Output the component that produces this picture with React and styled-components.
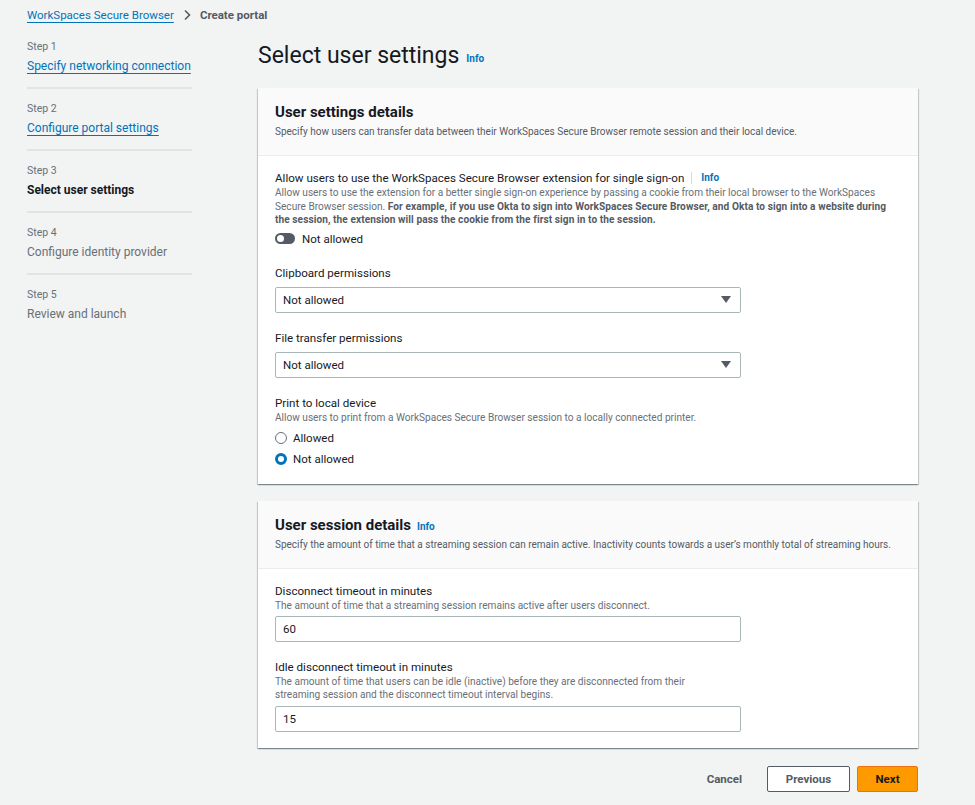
import React from 'react';
import styled, { createGlobalStyle } from 'styled-components';

const GlobalStyle = createGlobalStyle`
    body {
        margin: 0;
        background: #f2f3f3;
        font-family: Roboto, 'Liberation Sans', Arial, sans-serif;
        color: #16191f;
    }
`;

const Page = styled.div`
    padding: 7px 0 0 27px;
    width: 918px;
    min-height: 805px;
    box-sizing: border-box;
`;

const Breadcrumbs = styled.nav`
    display: flex;
    align-items: center;
    gap: 7px;
    height: 16px;
    font-size: 11.5px;
`;

const Crumb = styled.a`
    color: #0073bb;
    text-decoration: underline;
    text-underline-offset: 3px;
`;

const Current = styled.span`
    color: #545b64;
    font-weight: bold;
`;

const Layout = styled.div`
    display: grid;
    grid-template-columns: 165px 1fr;
    column-gap: 66px;
    margin-top: 11px;
`;

const StepList = styled.ol`
    list-style: none;
    margin: 6px 0 0;
    padding: 0;
`;

const Step = styled.li`
    padding: 0 0 13px;
    margin-bottom: 13px;
    border-bottom: ${({ last }) => (last ? 'none' : '2px solid #e1e4e4')};
`;

const StepLabel = styled.div`
    font-size: 10.5px;
    color: #687078;
    line-height: 14px;
    margin-bottom: 5px;
`;

const StepName = styled.div`
    font-size: 12px;
    line-height: 15px;
    color: ${({ state }) => (state === 'active' ? '#16191f' : state === 'link' ? '#0073bb' : '#687078')};
    font-weight: ${({ state }) => (state === 'active' ? 'bold' : 'normal')};
    text-decoration: ${({ state }) => (state === 'link' ? 'underline' : 'none')};
    text-underline-offset: 3px;
`;

const Main = styled.main`
    display: flex;
    flex-direction: column;
    gap: 17px;
`;

const Title = styled.h1`
    margin: 7px 0 0;
    height: 30px;
    display: flex;
    align-items: center;
    gap: 7px;
    font-size: 23px;
    font-weight: normal;
    line-height: 28px;
`;

const Info = styled.a`
    color: #0073bb;
    font-size: 10px;
    font-weight: bold;
    margin-top: ${({ low }) => (low ? '5px' : '0')};
`;

const Card = styled.section`
    background: #fff;
    box-shadow: 0 1px 1px 0 rgba(0, 28, 36, 0.3), 1px 1px 1px 0 rgba(0, 28, 36, 0.15),
        -1px 1px 1px 0 rgba(0, 28, 36, 0.15);
`;

const CardHeader = styled.header`
    background: #fafafa;
    border-bottom: 1px solid #eaeded;
    padding: 14px 17px 17px;
`;

const CardTitle = styled.h2`
    margin: 0;
    height: 20px;
    font-size: 15px;
    line-height: 20px;
    display: flex;
    align-items: baseline;
    gap: 6px;
`;

const CardDescription = styled.p`
    margin: 3px 0 0;
    font-size: 10px;
    line-height: 13px;
    color: #545b64;
`;

const CardBody = styled.div`
    padding: 14px 17px 16px;
    display: flex;
    flex-direction: column;
    gap: 17px;
`;

const Field = styled.div`
    max-width: ${({ narrow }) => (narrow ? '466px' : 'none')};
`;

const Label = styled.div`
    font-size: 11.6px;
    line-height: 16px;
    display: flex;
    align-items: center;
`;

const LabelInfo = styled.span`
    margin-left: 7px;
    padding-left: 9px;
    border-left: 1px solid #d5dbdb;
    color: #0073bb;
    font-size: 10px;
    font-weight: bold;
    line-height: 12px;
`;

const Hint = styled.p`
    margin: 0;
    max-width: ${({ wrap }) => (wrap ? `${wrap}px` : 'none')};
    font-size: 10.1px;
    line-height: 13.5px;
    color: #687078;

    strong {
        color: #545b64;
        letter-spacing: 0.08px;
    }
`;

const Control = styled.div`
    margin-top: ${({ gap }) => gap}px;
    height: 26px;
    box-sizing: border-box;
    border: 1px solid #aab7b8;
    border-radius: 2px;
    background: #fff;
    display: flex;
    align-items: center;
    justify-content: space-between;
    padding: 0 9px 0 7px;
    font-size: 11.5px;
`;

const Arrow = styled.span`
    width: 0;
    height: 0;
    border-left: 5px solid transparent;
    border-right: 5px solid transparent;
    border-top: 7px solid #545b64;
`;

const ToggleRow = styled.div`
    margin: 5px 0 2px;
    display: flex;
    align-items: center;
    gap: 7px;
    font-size: 11.5px;
`;

const Track = styled.span`
    width: 20px;
    height: 11px;
    border-radius: 6px;
    background: #545b64;
    position: relative;

    &::after {
        content: '';
        position: absolute;
        left: 2px;
        top: 2px;
        width: 7px;
        height: 7px;
        border-radius: 50%;
        background: #fff;
    }
`;

const RadioGroup = styled.div`
    margin-top: 5px;
    display: flex;
    flex-direction: column;
    gap: 3px;
`;

const RadioRow = styled.label`
    display: flex;
    align-items: center;
    gap: 6px;
    height: 18px;
    font-size: 11.5px;
`;

const Dot = styled.span`
    width: 12px;
    height: 12px;
    box-sizing: border-box;
    border-radius: 50%;
    background: #fff;
    border: ${({ checked }) => (checked ? '3.5px solid #0073bb' : '1px solid #687078')};
`;

const Actions = styled.div`
    display: flex;
    justify-content: flex-end;
    align-items: center;
    gap: 7px;
    margin-top: 1px;
`;

const Button = styled.button`
    height: 26px;
    box-sizing: border-box;
    padding: 0 ${({ variant }) => (variant === 'link' ? '17px' : '0')};
    width: ${({ variant }) => (variant === 'link' ? 'auto' : variant === 'primary' ? '61px' : '83px')};
    border-radius: 2px;
    font-family: inherit;
    font-size: 11.5px;
    font-weight: bold;
    border: ${({ variant }) =>
        variant === 'primary' ? '1px solid #ec7211' : variant === 'link' ? '1px solid transparent' : '1px solid #545b64'};
    background: ${({ variant }) => (variant === 'primary' ? '#ff9900' : variant === 'link' ? 'transparent' : '#fff')};
    color: ${({ variant }) => (variant === 'primary' ? '#16191f' : '#545b64')};
`;

const steps = [
    { label: 'Step 1', name: 'Specify networking connection', state: 'link' },
    { label: 'Step 2', name: 'Configure portal settings', state: 'link' },
    { label: 'Step 3', name: 'Select user settings', state: 'active' },
    { label: 'Step 4', name: 'Configure identity provider', state: 'disabled' },
    { label: 'Step 5', name: 'Review and launch', state: 'disabled' },
];

const Select = ({ value }) => (
    <Control gap={6}>
        {value}
        <Arrow />
    </Control>
);

const App = () => (
    <>
        <GlobalStyle />
        <Page>
            <Breadcrumbs>
                <Crumb>WorkSpaces Secure Browser</Crumb>
                <svg width="12" height="12" viewBox="0 0 12 12">
                    <path d="M4 1.5 8.5 6 4 10.5" fill="none" stroke="#545b64" strokeWidth="1.6" />
                </svg>
                <Current>Create portal</Current>
            </Breadcrumbs>
            <Layout>
                <StepList>
                    {steps.map((s, i) => (
                        <Step key={s.label} last={i === steps.length - 1}>
                            <StepLabel>{s.label}</StepLabel>
                            <StepName state={s.state}>{s.name}</StepName>
                        </Step>
                    ))}
                </StepList>
                <Main>
                    <Title>
                        Select user settings <Info low>Info</Info>
                    </Title>
                    <Card>
                        <CardHeader>
                            <CardTitle>User settings details</CardTitle>
                            <CardDescription>
                                Specify how users can transfer data between their WorkSpaces Secure Browser remote
                                session and their local device.
                            </CardDescription>
                        </CardHeader>
                        <CardBody>
                            <Field>
                                <Label>
                                    Allow users to use the WorkSpaces Secure Browser extension for single sign-on
                                    <LabelInfo>Info</LabelInfo>
                                </Label>
                                <Hint>
                                    Allow users to use the extension for a better single sign-on experience by passing a
                                    cookie from their local browser to the WorkSpaces Secure Browser session.{' '}
                                    <strong>
                                        For example, if you use Okta to sign into WorkSpaces Secure Browser, and Okta to
                                        sign into a website during the session, the extension will pass the cookie from
                                        the first sign in to the session.
                                    </strong>
                                </Hint>
                                <ToggleRow>
                                    <Track />
                                    Not allowed
                                </ToggleRow>
                            </Field>
                            <Field narrow>
                                <Label>Clipboard permissions</Label>
                                <Select value="Not allowed" />
                            </Field>
                            <Field narrow>
                                <Label>File transfer permissions</Label>
                                <Select value="Not allowed" />
                            </Field>
                            <Field narrow>
                                <Label>Print to local device</Label>
                                <Hint>
                                    Allow users to print from a WorkSpaces Secure Browser session to a locally connected
                                    printer.
                                </Hint>
                                <RadioGroup>
                                    <RadioRow>
                                        <Dot />
                                        Allowed
                                    </RadioRow>
                                    <RadioRow>
                                        <Dot checked />
                                        Not allowed
                                    </RadioRow>
                                </RadioGroup>
                            </Field>
                        </CardBody>
                    </Card>
                    <Card>
                        <CardHeader>
                            <CardTitle>
                                User session details <Info>Info</Info>
                            </CardTitle>
                            <CardDescription>
                                Specify the amount of time that a streaming session can remain active. Inactivity counts
                                towards a user’s monthly total of streaming hours.
                            </CardDescription>
                        </CardHeader>
                        <CardBody>
                            <Field narrow>
                                <Label>Disconnect timeout in minutes</Label>
                                <Hint>The amount of time that a streaming session remains active after users disconnect.</Hint>
                                <Control gap={3}>60</Control>
                            </Field>
                            <Field narrow>
                                <Label>Idle disconnect timeout in minutes</Label>
                                <Hint wrap={420}>
                                    The amount of time that users can be idle (inactive) before they are disconnected from
                                    their streaming session and the disconnect timeout interval begins.
                                </Hint>
                                <Control gap={4}>15</Control>
                            </Field>
                        </CardBody>
                    </Card>
                    <Actions>
                        <Button variant="link">Cancel</Button>
                        <Button>Previous</Button>
                        <Button variant="primary">Next</Button>
                    </Actions>
                </Main>
            </Layout>
        </Page>
    </>
);

export default App;
